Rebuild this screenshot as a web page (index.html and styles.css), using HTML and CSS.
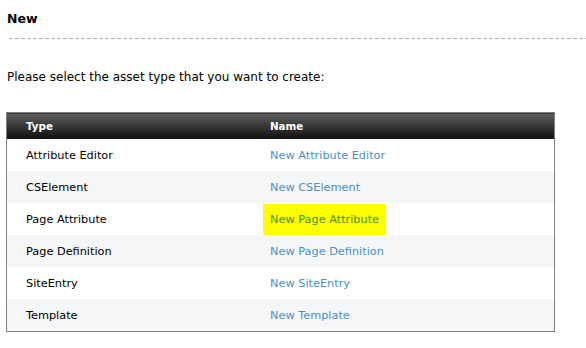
FILE: index.html
```html
<!DOCTYPE html>
<html lang="en">
<head>
    <meta charset="UTF-8">
    <title>New</title>
    <link rel="stylesheet" href="styles.css">
</head>
<body>
    <div class="page">
        <h2 class="title">New</h2>
        <div class="divider"></div>
        <p class="intro">Please select the asset type that you want to create:</p>
        <table class="assets">
            <thead>
                <tr>
                    <th class="col-type">Type</th>
                    <th>Name</th>
                </tr>
            </thead>
            <tbody>
                <tr>
                    <td>Attribute Editor</td>
                    <td><a href="#">New Attribute Editor</a></td>
                </tr>
                <tr>
                    <td>CSElement</td>
                    <td><a href="#">New CSElement</a></td>
                </tr>
                <tr>
                    <td>Page Attribute</td>
                    <td><a href="#" class="highlight">New Page Attribute</a></td>
                </tr>
                <tr>
                    <td>Page Definition</td>
                    <td><a href="#">New Page Definition</a></td>
                </tr>
                <tr>
                    <td>SiteEntry</td>
                    <td><a href="#">New SiteEntry</a></td>
                </tr>
                <tr>
                    <td>Template</td>
                    <td><a href="#">New Template</a></td>
                </tr>
            </tbody>
        </table>
    </div>
</body>
</html>
```

FILE: styles.css
```css
body {
    margin: 0;
    background: #fff;
    font-family: "DejaVu Sans", Verdana, sans-serif;
    font-size: 12px;
    color: #000;
}

.page {
    padding: 11px 0 0 6px;
}

.title {
    margin: 0 0 0 1px;
    font-size: 12.5px;
    font-weight: bold;
    line-height: 16px;
}

.divider {
    margin: 11px 0 0 3px;
    height: 1px;
    background-image: linear-gradient(to right, #b4b4b4 4px, transparent 4px);
    background-size: 6px 1px;
}

.intro {
    margin: 31px 0 0 1px;
    line-height: 14px;
}

.assets {
    margin-top: 28px;
    width: 549px;
    border-collapse: collapse;
    border: 1px solid #7f7f7f;
    font-size: 11.3px;
}

.assets th {
    height: 26px;
    padding: 0 0 0 19px;
    text-align: left;
    color: #fff;
    font-size: 10.3px;
    font-weight: bold;
    background: linear-gradient(to bottom, #5e5e5e, #1a1a1a 85%, #111);
}

.assets .col-type {
    width: 225px;
}

.assets td {
    height: 32px;
    padding: 0 0 0 19px;
}

.assets tbody tr:nth-child(even) td {
    background: #f5f6f8;
}

.assets a {
    color: #4a90c8;
    text-decoration: none;
}

.assets a.highlight {
    display: inline-block;
    margin-left: -7px;
    padding: 9px 7px;
    background: #ffff00;
    color: #4a9000;
}
```
